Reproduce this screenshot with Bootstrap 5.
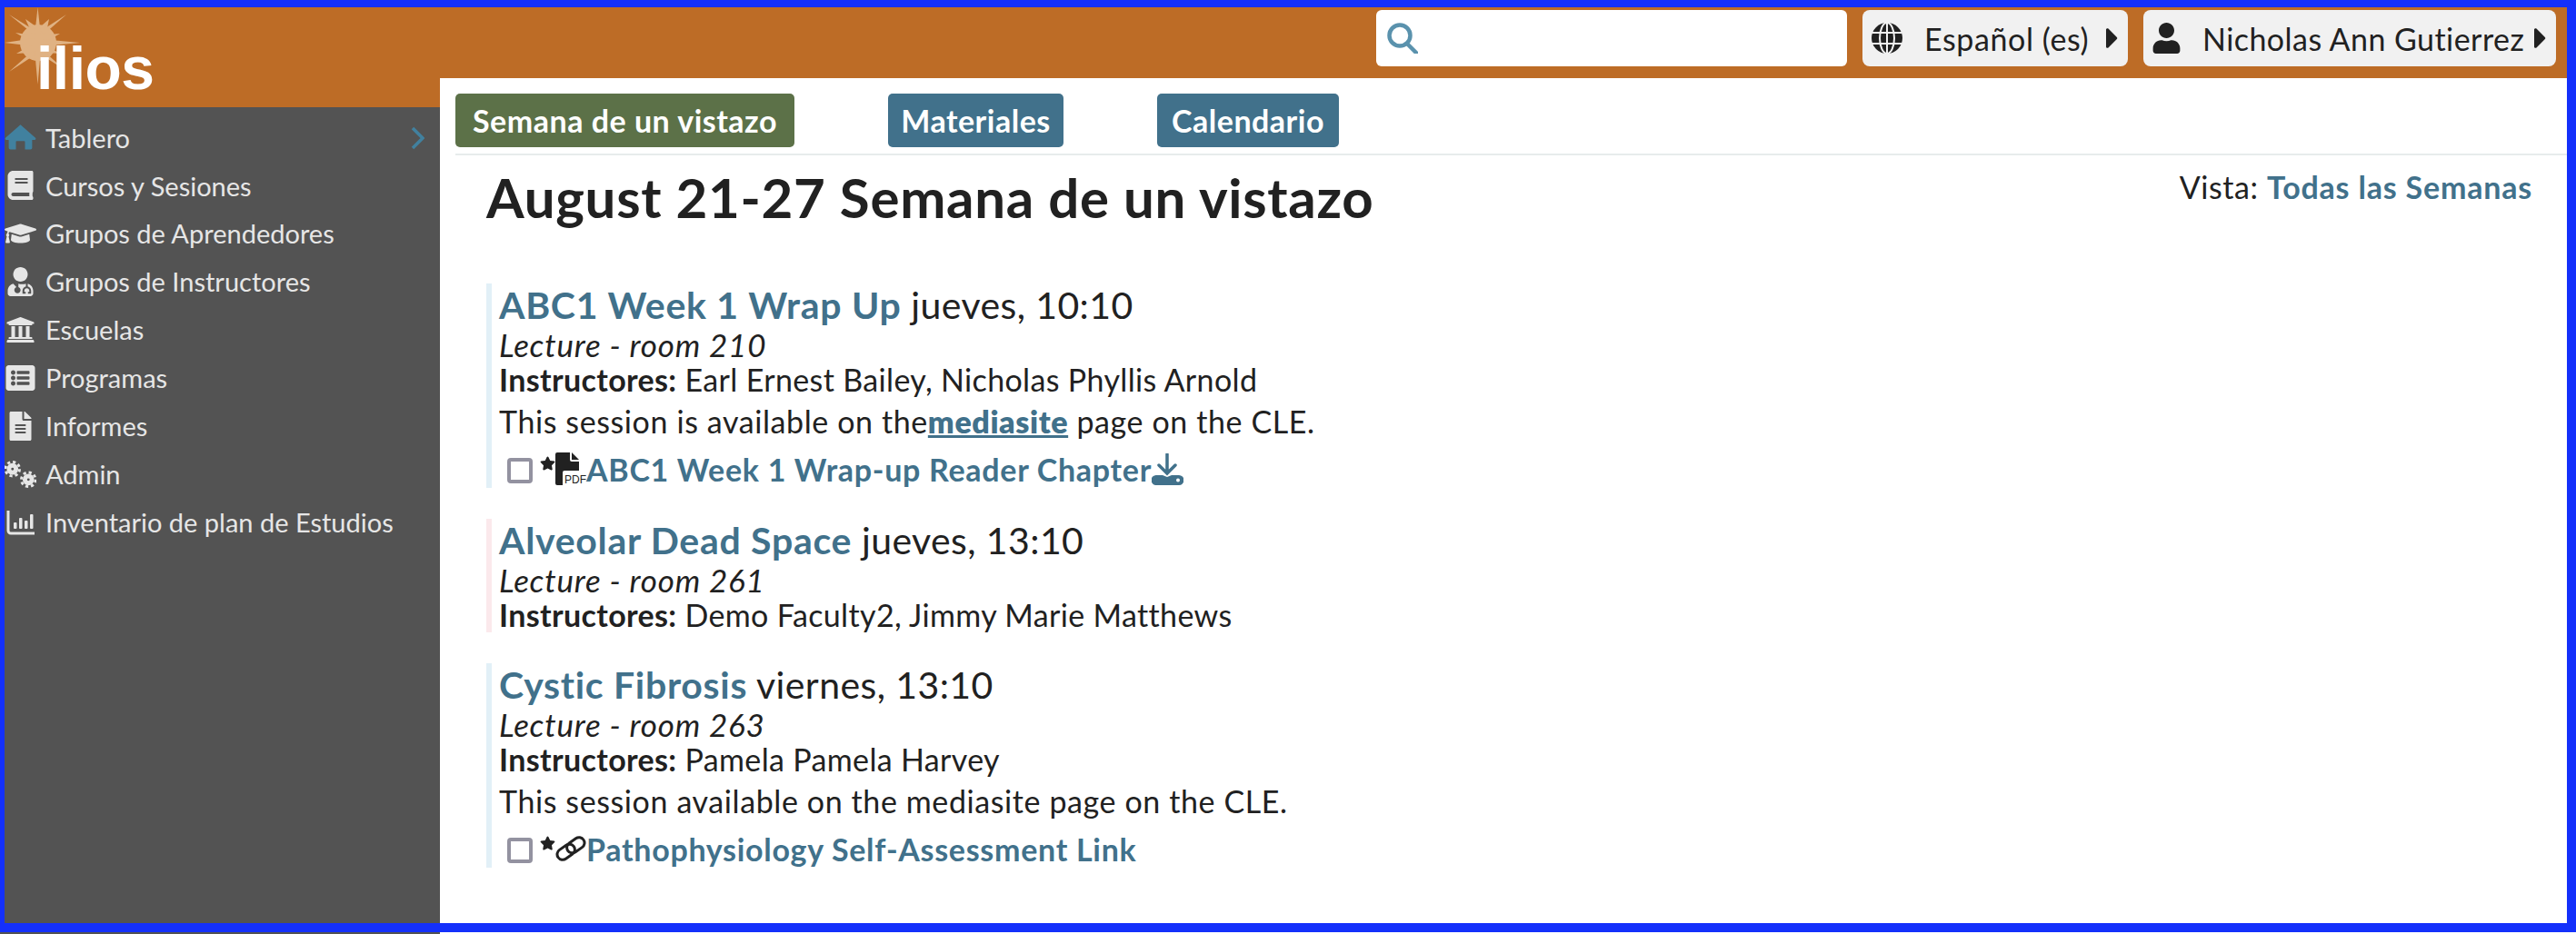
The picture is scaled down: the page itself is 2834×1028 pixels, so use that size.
<!DOCTYPE html>
<html lang="es">
<head>
  <meta charset="UTF-8" />
  <title>Ilios - Semana de un vistazo</title>
  <link rel="stylesheet" href="https://cdn.jsdelivr.net/npm/bootstrap@5.3.0/dist/css/bootstrap.min.css" />
  <style>
    html, body { height: 1028px; overflow: hidden; }
    body { font-family: Lato, "Open Sans", sans-serif; font-size: 34px; letter-spacing: .6px; color: #212121; background: #fff; }
    a { color: #41718b; text-decoration: none; }
    svg { fill: currentColor; display: block; flex: none; }

    /* blue frame drawn over the page */
    .shot-frame { position: absolute; left: 0; top: 0; width: 2834px; height: 1026px; border: solid #1430fb; border-width: 8px 10px 10px 5px; pointer-events: none; z-index: 5; }

    .side-col { width: 484px; flex: none; height: 1028px; }
    .logo-box { height: 118px; background: #bd6c26; position: relative; }
    .logo-box text { font-family: "Liberation Sans", sans-serif; font-weight: 700; font-size: 66px; fill: #fff; letter-spacing: -.5px; }
    .side-nav { background: #535353; padding-top: 7px; padding-left: 5px; }
    .side-item { height: 52.9px; color: #e6e6e6; font-size: 29px; letter-spacing: 0; position: relative; }
    .side-ico { width: 35px; height: 32px; margin-right: 10px; }
    .side-chev { position: absolute; left: 447px; top: 14px; color: #41819f; }

    .top-bar { height: 86px; background: #bd6c26; padding: 11px 22px 0 0; gap: 17px; }
    .search-box { width: 518px; height: 62px; background: #fff; border-radius: 6px; color: #5a92ad; padding-left: 12px; }
    .pick-btn { height: 62px; background: #f1f1f1; border-radius: 8px; padding: 0 10px; color: #212121; }
    .lang-btn { width: 292px; }
    .user-btn { width: 454px; letter-spacing: .45px; }
    .tab-row { margin-left: 17px; height: 85px; padding-top: 17px; border-bottom: 2px solid #e7ecec; }
    .tab-pill { height: 59px; border-radius: 5px; background: #41718b; color: #fff; font-weight: 700; letter-spacing: .5px; display: flex; align-items: center; justify-content: center; }
    .tab-week { width: 373px; background: #5c7148; margin-right: 103px; }
    .tab-mat { width: 193px; margin-right: 103px; }
    .tab-cal { width: 200px; }
    .week-body { padding: 0 48px 0 51px; }
    .week-head { height: 141px; }
    .week-title { font-size: 60px; font-weight: 700; letter-spacing: .7px; line-height: 66px; margin: 13px 0 0; }
    .view-link { line-height: 40px; margin-top: 15px; }
    .view-link a { font-weight: 700; letter-spacing: .8px; }

    .evt { border-left: 6px solid #e2f0f7; padding-left: 8px; margin-bottom: 34px; }
    .evt-pink { border-left-color: #fbe9ec; }
    .evt-title { font-size: 41px; letter-spacing: .4px; line-height: 48px; }
    .evt-title a { font-weight: 700; letter-spacing: .7px; }
    .evt-line { line-height: 38px; letter-spacing: .35px; }
    .evt-line em { font-size: 35px; letter-spacing: .8px; }
    .evt-line strong { font-weight: 700; }
    .evt-desc { line-height: 38px; margin-top: 8px; }
    .evt-desc a { font-weight: 800; text-decoration: underline; }
    .evt-file { height: 42px; margin-top: 12px; padding-left: 9px; }
    .evt-file a { font-weight: 700; letter-spacing: .7px; }
    .fake-check { width: 28px; height: 28px; border: 4px solid #9392a0; border-radius: 4px; margin: 4px 8px 0 0; flex: none; }
    .star-ico { margin-top: -12px; }
    .pdf-label { font-family: "Liberation Sans", sans-serif; font-size: 12px; letter-spacing: 0; fill: #212121; }
  </style>
</head>
<body>
  <div class="shot-frame"></div>

  <div class="d-flex">
    <div class="side-col d-flex flex-column">
      <div class="logo-box">
        <svg width="200" height="118" viewBox="0 0 200 118">
          <g fill="#e0b283">
            <circle cx="42" cy="47" r="20"/>
            <polygon points="38,40 41.500,8 45,40"/>
            <polygon points="38,42 5,47 38,51"/>
            <polygon points="45,43 88,47 45,51"/>
            <polygon points="38,54 41.500,93 45,54"/>
            <polygon points="36,37 10,16 39,34"/>
            <polygon points="45,34 73,16 48,38"/>
            <polygon points="36,56 10,79 39,60"/>
            <polygon points="48,56 70,76 45,60"/>
            <polygon points="32,30 28,21 38,28"/>
            <polygon points="46,28 54,21 52,31"/>
            <polygon points="30,38 17,36 31,44"/>
            <polygon points="54,38 66,37 54,44"/>
            <polygon points="30,52 18,59 33,58"/>
            <polygon points="54,52 66,59 52,58"/>
          </g>
          <text x="40" y="98">ilios</text>
        </svg>
      </div>
      <nav class="side-nav flex-grow-1">
        <a class="side-item d-flex align-items-center" href="#">
          <svg class="side-ico" style="color:#41819f" viewBox="0 0 576 512"><path d="M288 30L560 270a20 20 0 0 1-16 34H500V450a30 30 0 0 1-30 30H370V340a16 16 0 0 0-16-16H222a16 16 0 0 0-16 16V480H106a30 30 0 0 1-30-30V304H32a20 20 0 0 1-16-34z"/></svg>
          Tablero
          <svg class="side-chev" width="15" height="26" viewBox="0 0 15 26"><path d="M2 2l11 11L2 24" fill="none" stroke="currentColor" stroke-width="3.500"/></svg>
        </a>
        <a class="side-item d-flex align-items-center" href="#">
          <svg class="side-ico" viewBox="0 0 448 512"><path d="M448 360V24c0-13.300-10.700-24-24-24H96C43 0 0 43 0 96v320c0 53 43 96 96 96h328c13.300 0 24-10.700 24-24v-16c0-7.500-3.500-14.300-8.900-18.700-4.200-15.400-4.200-59.300 0-74.700 5.400-4.300 8.900-11.100 8.900-18.600zM128 134c0-3.300 2.700-6 6-6h212c3.300 0 6 2.700 6 6v20c0 3.300-2.700 6-6 6H134c-3.300 0-6-2.700-6-6v-20zm0 64c0-3.300 2.700-6 6-6h212c3.300 0 6 2.700 6 6v20c0 3.300-2.700 6-6 6H134c-3.300 0-6-2.700-6-6v-20zm253.400 250H96c-17.700 0-32-14.300-32-32 0-17.600 14.400-32 32-32h285.400c-1.900 17.100-1.900 46.900 0 64z"/></svg>
          Cursos y Sesiones
        </a>
        <a class="side-item d-flex align-items-center" href="#">
          <svg class="side-ico" viewBox="0 0 640 512"><path d="M622.340 153.200L343.400 67.500c-15.200-4.670-31.600-4.670-46.790 0L17.660 153.200c-23.540 7.230-23.540 38.360 0 45.590l48.630 14.940c-10.670 13.190-17.230 29.280-17.880 46.900C38.780 266.150 32 276.110 32 288c0 10.780 5.680 19.850 13.860 25.650L20.330 428.530C18.110 438.520 25.710 448 35.940 448h56.110c10.240 0 17.840-9.480 15.620-19.470L82.140 313.650C90.320 307.850 96 298.780 96 288c0-11.570-6.470-21.250-15.660-26.870.76-15.020 8.440-28.300 20.690-36.720L296.600 284.500c9.060 2.780 26.440 6.250 46.790 0l278.950-85.700c23.550-7.240 23.550-38.360 0-45.600zM352.790 315.090c-28.530 8.760-52.840 3.920-65.590 0l-145.020-44.550L128 384c0 35.350 85.960 64 192 64s192-28.650 192-64l-14.180-113.470-145.030 44.560z"/></svg>
          Grupos de Aprendedores
        </a>
        <a class="side-item d-flex align-items-center" href="#">
          <svg class="side-ico" viewBox="0 0 448 512"><path d="M224 256c70.700 0 128-57.300 128-128S294.700 0 224 0 96 57.300 96 128s57.300 128 128 128z"/><path d="M96 290C40 305 0 355 0 415v49c0 26.500 21.500 48 48 48h352c26.500 0 48-21.500 48-48v-49c0-60-40-110-96-125v50c36 8 60 40 60 76v50h-56v-30h24v-20c0-25-20-44-44-44s-44 19-44 44v20h24v30h-56v-50c0-36 24-68 60-76v-50c-30 14-100 14-132 0v62c22 7 38 28 38 52 0 30-25 55-55 55s-55-25-55-55c0-24 16-45 38-52z"/></svg>
          Grupos de Instructores
        </a>
        <a class="side-item d-flex align-items-center" href="#">
          <svg class="side-ico" viewBox="0 0 512 512"><path d="M496 128v16a8 8 0 0 1-8 8h-24v12c0 6.627-5.373 12-12 12H60c-6.627 0-12-5.373-12-12v-12H24a8 8 0 0 1-8-8v-16a8 8 0 0 1 4.941-7.392l232-88a7.996 7.996 0 0 1 6.118 0l232 88A8 8 0 0 1 496 128zm-24 304H40c-13.255 0-24 10.745-24 24v16a8 8 0 0 0 8 8h464a8 8 0 0 0 8-8v-16c0-13.255-10.745-24-24-24zM96 192v192H60c-6.627 0-12 5.373-12 12v20h416v-20c0-6.627-5.373-12-12-12h-36V192h-64v192h-64V192h-64v192h-64V192H96z"/></svg>
          Escuelas
        </a>
        <a class="side-item d-flex align-items-center" href="#">
          <svg class="side-ico" viewBox="0 0 512 512"><path d="M464 480H48c-26.510 0-48-21.490-48-48V80c0-26.510 21.490-48 48-48h416c26.510 0 48 21.490 48 48v352c0 26.510-21.490 48-48 48zM128 120c-22.091 0-40 17.909-40 40s17.909 40 40 40 40-17.909 40-40-17.909-40-40-40zm0 96c-22.091 0-40 17.909-40 40s17.909 40 40 40 40-17.909 40-40-17.909-40-40-40zm0 96c-22.091 0-40 17.909-40 40s17.909 40 40 40 40-17.909 40-40-17.909-40-40-40zm288-136v-32c0-6.627-5.373-12-12-12H204c-6.627 0-12 5.373-12 12v32c0 6.627 5.373 12 12 12h200c6.627 0 12-5.373 12-12zm0 96v-32c0-6.627-5.373-12-12-12H204c-6.627 0-12 5.373-12 12v32c0 6.627 5.373 12 12 12h200c6.627 0 12-5.373 12-12zm0 96v-32c0-6.627-5.373-12-12-12H204c-6.627 0-12 5.373-12 12v32c0 6.627 5.373 12 12 12h200c6.627 0 12-5.373 12-12z"/></svg>
          Programas
        </a>
        <a class="side-item d-flex align-items-center" href="#">
          <svg class="side-ico" viewBox="0 0 384 512"><path d="M224 136V0H24C10.700 0 0 10.700 0 24v464c0 13.300 10.700 24 24 24h336c13.300 0 24-10.700 24-24V160H248c-13.200 0-24-10.800-24-24zm64 236c0 6.600-5.400 12-12 12H108c-6.600 0-12-5.400-12-12v-8c0-6.600 5.400-12 12-12h168c6.600 0 12 5.400 12 12v8zm0-64c0 6.600-5.400 12-12 12H108c-6.600 0-12-5.400-12-12v-8c0-6.600 5.400-12 12-12h168c6.600 0 12 5.400 12 12v8zm0-72v8c0 6.600-5.400 12-12 12H108c-6.600 0-12-5.400-12-12v-8c0-6.600 5.400-12 12-12h168c6.600 0 12 5.400 12 12zm96-114.100v6.100H256V0h6.100c6.400 0 12.500 2.500 17 7l97.900 98c4.500 4.500 7 10.600 7 16.900z"/></svg>
          Informes
        </a>
        <a class="side-item d-flex align-items-center" href="#">
          <svg class="side-ico" viewBox="0 0 36 30"><g fill="none" stroke="currentColor"><circle cx="9" cy="9" r="4" stroke-width="5"/><circle cx="9" cy="9" r="8" stroke-width="3" stroke-dasharray="3.300 3"/><circle cx="27" cy="21" r="4" stroke-width="5"/><circle cx="27" cy="21" r="8" stroke-width="3" stroke-dasharray="3.300 3"/></g></svg>
          Admin
        </a>
        <a class="side-item d-flex align-items-center" href="#">
          <svg class="side-ico" viewBox="0 0 35 30"><path d="M4 2v22a3 3 0 0 0 3 3h26" fill="none" stroke="currentColor" stroke-width="3"/><rect x="10" y="15" width="3.500" height="7" rx="1"/><rect x="16" y="10" width="3.500" height="12" rx="1"/><rect x="22" y="13" width="3.500" height="9" rx="1"/><rect x="28" y="6" width="3.500" height="16" rx="1"/></svg>
          Inventario de plan de Estudios
        </a>
      </nav>
    </div>

    <div class="flex-grow-1">
      <div class="top-bar d-flex justify-content-end">
        <div class="search-box d-flex align-items-center">
          <svg width="34" height="34" viewBox="0 0 34 34"><circle cx="14" cy="14" r="11.500" fill="none" stroke="currentColor" stroke-width="4.500"/><path d="M22 23l10 10" fill="none" stroke="currentColor" stroke-width="4.500" stroke-linecap="round"/></svg>
        </div>
        <div class="pick-btn lang-btn d-flex align-items-center">
          <svg width="34" height="34" viewBox="0 0 34 34" class="me-4"><circle cx="17" cy="17" r="17"/><g fill="none" stroke="#f1f1f1" stroke-width="2"><ellipse cx="17" cy="17" rx="8" ry="17"/><path d="M1 11h32M1 23h32M17 0v34"/></g></svg>
          <span>Español (es)</span>
          <svg class="ms-auto" width="14" height="38" viewBox="0 0 192 512"><path d="M0 384.662V127.338c0-17.818 21.543-26.741 34.142-14.142l128.662 128.662c7.810 7.810 7.810 20.474 0 28.284L34.142 398.804C21.543 411.404 0 402.480 0 384.662z"/></svg>
        </div>
        <div class="pick-btn user-btn d-flex align-items-center">
          <svg width="31" height="34" viewBox="0 0 448 512" class="me-4"><path d="M224 256c70.700 0 128-57.300 128-128S294.700 0 224 0 96 57.300 96 128s57.300 128 128 128zm89.600 32h-16.700c-22.200 10.200-46.900 16-72.900 16s-50.600-5.800-72.900-16h-16.700C60.200 288 0 348.200 0 422.400V464c0 26.500 21.500 48 48 48h352c26.500 0 48-21.500 48-48v-41.600c0-74.200-60.200-134.400-134.400-134.400z"/></svg>
          <span>Nicholas Ann Gutierrez</span>
          <svg class="ms-auto" width="14" height="38" viewBox="0 0 192 512"><path d="M0 384.662V127.338c0-17.818 21.543-26.741 34.142-14.142l128.662 128.662c7.810 7.810 7.810 20.474 0 28.284L34.142 398.804C21.543 411.404 0 402.480 0 384.662z"/></svg>
        </div>
      </div>

      <div class="tab-row d-flex">
        <a class="tab-pill tab-week" href="#">Semana de un vistazo</a>
        <a class="tab-pill tab-mat" href="#">Materiales</a>
        <a class="tab-pill tab-cal" href="#">Calendario</a>
      </div>

      <div class="week-body">
        <div class="week-head d-flex justify-content-between align-items-start">
          <h1 class="week-title">August 21-27 Semana de un vistazo</h1>
          <div class="view-link">Vista: <a href="#">Todas las Semanas</a></div>
        </div>

        <div class="evt">
          <div class="evt-title"><a href="#">ABC1 Week 1 Wrap Up</a> jueves, 10:10</div>
          <div class="evt-line"><em>Lecture - room 210</em></div>
          <div class="evt-line"><strong>Instructores:</strong> Earl Ernest Bailey, Nicholas Phyllis Arnold</div>
          <div class="evt-desc">This session is available on the<a href="#">mediasite</a> page on the CLE.</div>
          <div class="evt-file d-flex align-items-center">
            <span class="fake-check"></span>
            <svg class="star-ico" width="17" height="16" viewBox="0 0 576 512"><path d="M259.300 17.800L194 150.200 47.900 171.500c-26.200 3.800-36.700 36.100-17.700 54.600l105.700 103-25 145.500c-4.500 26.300 23.200 46 46.400 33.700L288 439.600l130.700 68.700c23.200 12.200 50.900-7.400 46.400-33.700l-25-145.500 105.700-103c19-18.500 8.500-50.800-17.700-54.600L382 150.200 316.700 17.800c-11.700-23.600-45.600-23.900-57.400 0z"/></svg>
            <svg width="34" height="36" viewBox="0 0 34 36"><path d="M0 2a2 2 0 0 1 2-2h14v8a2 2 0 0 0 2 2h8v10H10a2 2 0 0 0-2 2v14H2a2 2 0 0 1-2-2z"/><path d="M18 0l8 8h-8z"/><text class="pdf-label" x="10" y="34" textLength="24" lengthAdjust="spacingAndGlyphs">PDF</text></svg>
            <a href="#">ABC1 Week 1 Wrap-up Reader Chapter</a>
            <svg style="color:#41718b" width="35" height="35" viewBox="0 0 35 35"><path d="M17 1v20M8 13l9 9 9-9" fill="none" stroke="currentColor" stroke-width="3.500" stroke-linecap="round"/><path d="M5 24h7l5 2 5-2h8a5 5 0 0 1 0 11H5a5 5 0 0 1 0-11z"/><circle cx="29" cy="29.500" r="2" fill="#fff"/></svg>
          </div>
        </div>

        <div class="evt evt-pink">
          <div class="evt-title"><a href="#">Alveolar Dead Space</a> jueves, 13:10</div>
          <div class="evt-line"><em>Lecture - room 261</em></div>
          <div class="evt-line"><strong>Instructores:</strong> Demo Faculty2, Jimmy Marie Matthews</div>
        </div>

        <div class="evt">
          <div class="evt-title"><a href="#">Cystic Fibrosis</a> viernes, 13:10</div>
          <div class="evt-line"><em>Lecture - room 263</em></div>
          <div class="evt-line"><strong>Instructores:</strong> Pamela Pamela Harvey</div>
          <div class="evt-desc">This session available on the mediasite page on the CLE.</div>
          <div class="evt-file d-flex align-items-center">
            <span class="fake-check"></span>
            <svg class="star-ico" width="17" height="16" viewBox="0 0 576 512"><path d="M259.300 17.800L194 150.200 47.900 171.500c-26.200 3.800-36.700 36.100-17.700 54.600l105.700 103-25 145.500c-4.500 26.300 23.200 46 46.400 33.700L288 439.600l130.700 68.700c23.200 12.200 50.900-7.400 46.400-33.700l-25-145.500 105.700-103c19-18.500 8.500-50.800-17.700-54.600L382 150.200 316.700 17.800c-11.700-23.600-45.600-23.900-57.400 0z"/></svg>
            <svg width="34" height="28" viewBox="0 0 34 28"><g fill="none" stroke="currentColor" stroke-width="3" transform="rotate(-35 17 14)"><rect x="0" y="8" width="21" height="12" rx="6"/><rect x="13" y="8" width="21" height="12" rx="6"/></g></svg>
            <a href="#">Pathophysiology Self-Assessment Link</a>
          </div>
        </div>
      </div>
    </div>
  </div>

  <script src="https://cdn.jsdelivr.net/npm/bootstrap@5.3.0/dist/js/bootstrap.bundle.min.js"></script>
</body>
</html>
